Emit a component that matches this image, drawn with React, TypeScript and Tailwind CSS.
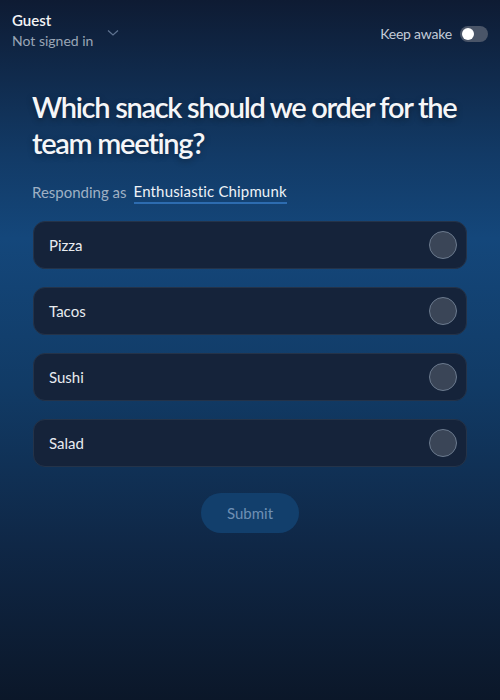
import React, { useState } from 'react';

const options = ['Pizza', 'Tacos', 'Sushi', 'Salad'];

const App: React.FC = () => {
  const [awake, setAwake] = useState(false);
  const [choice, setChoice] = useState<string | null>(null);

  return (
    <div
      className="min-h-[700px] w-full bg-[linear-gradient(180deg,#0e1b33_0%,#123a66_22%,#14477b_34%,#113b66_55%,#0f2746_78%,#0b1729_100%)] text-white"
      style={{ fontFamily: 'Lato, "Noto Sans", sans-serif' }}
    >
      {/* top bar */}
      <header className="flex items-start justify-between pl-3 pr-3 pt-[10px]">
        <button className="flex items-end gap-[14px] text-left">
          <div className="flex flex-col">
            <span className="text-[15px] font-semibold leading-[20px] text-[#f3f4f6]">Guest</span>
            <span className="text-[14px] leading-[22px] text-[#9aa6b6]">Not signed in</span>
          </div>
          <svg width="12" height="8" viewBox="0 0 12 8" className="mb-[15px]" fill="none">
            <path d="M1 1.5l5 4.5 5-4.5" stroke="#5f7391" strokeWidth="1.2" />
          </svg>
        </button>
        <div className="mt-[13px] flex items-center gap-[8px]">
          <span className="text-[14px] tracking-[-0.2px] text-[#c3ccd8]">Keep awake</span>
          <button
            onClick={() => setAwake(!awake)}
            className={`flex h-[16px] w-[28px] items-center rounded-full px-[2px] ${awake ? 'justify-end bg-[#2f6fb3]' : 'justify-start bg-[#4a5568]'}`}
          >
            <span className="h-[12px] w-[12px] rounded-full bg-white" />
          </button>
        </div>
      </header>

      <main className="px-8 pt-[37px]">
        <h1 className="-mr-2 text-[29px] font-semibold leading-[36px] tracking-[-1.3px] text-[#f5f6f8] [text-shadow:0_2px_6px_rgba(0,0,0,0.35)]">
          Which snack should we order for the team meeting?
        </h1>

        <p className="mt-[19px] flex items-center text-[15px] leading-[22px]">
          <span className="text-[#9fb0c4]">Responding as</span>
          <span className="ml-[7px] border-b-2 border-[#2d6cb0] tracking-[0.15px] text-[#eef2f7]">Enthusiastic Chipmunk</span>
        </p>

        <div className="mt-[17px] flex flex-col gap-[18px] pl-px pr-px">
          {options.map((o) => (
            <button
              key={o}
              onClick={() => setChoice(o)}
              className="flex h-[48px] items-center justify-between rounded-[12px] border border-[#243349] bg-[#15233a] pl-[15px] pr-[9px] text-left"
            >
              <span className="text-[15px] text-[#e8ebf0]">{o}</span>
              <span
                className={`h-[28px] w-[28px] rounded-full border ${choice === o ? 'border-[#60a5fa] bg-[#2f6fb3]' : 'border-[#6b7a8e] bg-[#3a4557]'}`}
              />
            </button>
          ))}
        </div>

        <div className="mt-[26px] flex justify-center">
          <button className="h-[40px] w-[98px] rounded-full bg-[#123f6c] text-[15px] text-[#6f90b4]">Submit</button>
        </div>
      </main>
    </div>
  );
};

export default App;
